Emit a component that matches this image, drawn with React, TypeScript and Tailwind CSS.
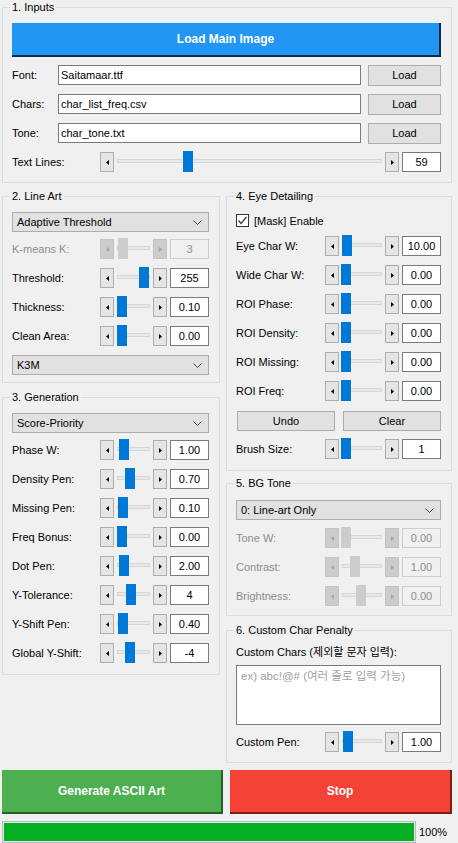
import React, { ReactNode } from "react";

// classic win32-style widgets for the ascii generator panel

function Group({ title, className, children }: { title: string; className: string; children: ReactNode }) {
    return (
        <div className={"relative border border-[#dcdcdc] flex flex-col " + className}>
            <span className="absolute left-[7px] top-[-8px] leading-[14px] px-[2px] bg-[#f0f0f0]">{title}</span>
            {children}
        </div>
    );
}

function Arrow({ dir, disabled }: { dir: "l" | "r"; disabled?: boolean }) {
    return (
        <div
            className={
                "w-[14px] h-[20px] shrink-0 border flex items-center justify-center " +
                (disabled ? "bg-[#cccccc] border-[#c4c4c4]" : "bg-[#e5e5e5] border-[#adadad]")
            }
        >
            <svg width="3" height="5" viewBox="0 0 3 5">
                {dir === "l" ? (
                    <polygon points="3,0 3,5 0,2.5" fill={disabled ? "#a3a3a3" : "#000"} />
                ) : (
                    <polygon points="0,0 0,5 3,2.5" fill={disabled ? "#a3a3a3" : "#000"} />
                )}
            </svg>
        </div>
    );
}

function Slider({ track, pos, disabled }: { track: string; pos: number; disabled?: boolean }) {
    return (
        <div className="flex h-[20px] shrink-0">
            <Arrow dir="l" disabled={disabled} />
            <div className={"relative h-[20px] " + track}>
                <div className="mt-[7px] mx-[3px] h-[4px] bg-[#e7eaea] border border-[#d6d6d6]" />
                <div
                    className={"absolute top-[-1px] w-[10px] h-[21px] " + (disabled ? "bg-[#cccccc]" : "bg-[#0078d7]")}
                    style={{ left: pos }}
                />
            </div>
            <Arrow dir="r" disabled={disabled} />
        </div>
    );
}

function ValueBox({ value, disabled }: { value: string; disabled?: boolean }) {
    return (
        <div
            className={
                "ml-[3px] w-[39px] h-[20px] shrink-0 border flex items-center justify-center " +
                (disabled ? "border-[#cccccc] text-[#8d8d8d]" : "border-[#7a7a7a] bg-white")
            }
        >
            {value}
        </div>
    );
}

function Row({
    label,
    value,
    pos,
    labelW,
    track,
    disabled,
    className = "",
}: {
    label: string;
    value: string;
    pos: number;
    labelW: string;
    track: string;
    disabled?: boolean;
    className?: string;
}) {
    return (
        <div className={"flex items-center h-[20px] " + className}>
            <span className={"shrink-0 " + labelW + (disabled ? " text-[#8d8d8d]" : "")}>{label}</span>
            <Slider track={track} pos={pos} disabled={disabled} />
            <ValueBox value={value} disabled={disabled} />
        </div>
    );
}

function Combo({ text, className = "" }: { text: string; className?: string }) {
    return (
        <div className={"h-[20px] bg-[#e1e1e1] border border-[#adadad] flex items-center pl-[4px] pr-[6px] " + className}>
            <span className="flex-1">{text}</span>
            <svg width="9" height="5" viewBox="0 0 9 5">
                <polyline points="0.5,0.5 4.5,4.5 8.5,0.5" fill="none" stroke="#444" strokeWidth="1" />
            </svg>
        </div>
    );
}

function FileRow({ label, file, className = "" }: { label: string; file: string; className?: string }) {
    return (
        <div className={"flex items-center h-[20px] " + className}>
            <span className="w-[46px] shrink-0">{label}</span>
            <div className="w-[303px] h-[20px] border border-[#7a7a7a] bg-white flex items-center pl-[2px]">{file}</div>
            <div className="ml-[7px] w-[73px] h-[21px] bg-[#e1e1e1] border border-[#adadad] flex items-center justify-center">
                Load
            </div>
        </div>
    );
}

const L = { labelW: "w-[88px]", track: "w-[39px]" };
const R = { labelW: "w-[89px]", track: "w-[46px]" };

export default function App() {
    return (
        <div className="w-[458px] h-[843px] overflow-hidden bg-[#f0f0f0] text-black text-[11px] leading-[14px] font-['Liberation_Sans','Noto_Sans_CJK_KR',sans-serif] flex flex-col pt-[7px]">
            <Group title="1. Inputs" className="ml-[2px] w-[450px] h-[177px] pt-[15px] pl-[9px] pr-[10px]">
                <div className="h-[34px] bg-[#2196f3] border-r-2 border-b-2 border-[#0c2c47] flex items-center justify-center text-white font-bold text-[12px]">
                    Load Main Image
                </div>
                <FileRow label="Font:" file="Saitamaar.ttf" className="mt-[8px]" />
                <FileRow label="Chars:" file="char_list_freq.csv" className="mt-[9px]" />
                <FileRow label="Tone:" file="char_tone.txt" className="mt-[9px]" />
                <Row label="Text Lines:" value="59" pos={69} labelW="w-[88px]" track="w-[271px]" className="mt-[9px]" />
            </Group>

            <div className="flex mt-[13px]">
                <div className="ml-[2px] w-[218px] flex flex-col">
                    <Group title="2. Line Art" className="h-[187px] pt-[15px] pl-[9px] pr-[10px]">
                        <Combo text="Adaptive Threshold" />
                        <Row label="K-means K:" value="3" pos={4} disabled {...L} className="mt-[7px]" />
                        <Row label="Threshold:" value="255" pos={25} {...L} className="mt-[9px]" />
                        <Row label="Thickness:" value="0.10" pos={3} {...L} className="mt-[9px]" />
                        <Row label="Clean Area:" value="0.00" pos={3} {...L} className="mt-[9px]" />
                        <Combo text="K3M" className="mt-[9px]" />
                    </Group>

                    <Group title="3. Generation" className="mt-[14px] h-[278px] pt-[15px] pl-[9px] pr-[10px]">
                        <Combo text="Score-Priority" />
                        <Row label="Phase W:" value="1.00" pos={5} {...L} className="mt-[7px]" />
                        <Row label="Density Pen:" value="0.70" pos={11} {...L} className="mt-[9px]" />
                        <Row label="Missing Pen:" value="0.10" pos={4} {...L} className="mt-[9px]" />
                        <Row label="Freq Bonus:" value="0.00" pos={3} {...L} className="mt-[9px]" />
                        <Row label="Dot Pen:" value="2.00" pos={5} {...L} className="mt-[9px]" />
                        <Row label="Y-Tolerance:" value="4" pos={12} {...L} className="mt-[9px]" />
                        <Row label="Y-Shift Pen:" value="0.40" pos={4} {...L} className="mt-[9px]" />
                        <Row label="Global Y-Shift:" value="-4" pos={11} {...L} className="mt-[9px]" />
                    </Group>
                </div>

                <div className="ml-[6px] w-[226px] flex flex-col">
                    <Group title="4. Eye Detailing" className="h-[275px] pt-[15px] pl-[9px] pr-[10px]">
                        <div className="flex items-center h-[17px]">
                            <div className="w-[13px] h-[13px] bg-white border border-[#333] flex items-center justify-center">
                                <svg width="11" height="11" viewBox="0 0 11 11">
                                    <polyline points="1.5,5.5 4,8.5 9.5,2" fill="none" stroke="#3c3c3c" strokeWidth="1.3" />
                                </svg>
                            </div>
                            <span className="ml-[5px]">[Mask] Enable</span>
                        </div>
                        <Row label="Eye Char W:" value="10.00" pos={3} {...R} className="mt-[7px]" />
                        <Row label="Wide Char W:" value="0.00" pos={2} {...R} className="mt-[9px]" />
                        <Row label="ROI Phase:" value="0.00" pos={2} {...R} className="mt-[9px]" />
                        <Row label="ROI Density:" value="0.00" pos={2} {...R} className="mt-[9px]" />
                        <Row label="ROI Missing:" value="0.00" pos={2} {...R} className="mt-[9px]" />
                        <Row label="ROI Freq:" value="0.00" pos={2} {...R} className="mt-[9px]" />
                        <div className="flex mt-[10px] h-[20px]">
                            <div className="ml-[1px] w-[98px] bg-[#e1e1e1] border border-[#adadad] flex items-center justify-center">Undo</div>
                            <div className="ml-[8px] w-[98px] bg-[#e1e1e1] border border-[#adadad] flex items-center justify-center">Clear</div>
                        </div>
                        <Row label="Brush Size:" value="1" pos={2} {...R} className="mt-[8px]" />
                    </Group>

                    <Group title="5. BG Tone" className="mt-[12px] h-[133px] pt-[16px] pl-[9px] pr-[10px]">
                        <Combo text="0: Line-art Only" />
                        <Row label="Tone W:" value="0.00" pos={2} disabled {...R} className="mt-[8px]" />
                        <Row label="Contrast:" value="1.00" pos={11} disabled {...R} className="mt-[9px]" />
                        <Row label="Brightness:" value="0.00" pos={17} disabled {...R} className="mt-[9px]" />
                    </Group>

                    <Group title="6. Custom Char Penalty" className="mt-[14px] h-[133px] pt-[14px] pl-[9px] pr-[10px]">
                        <span>Custom Chars (제외할 문자 입력):</span>
                        <div className="mt-[6px] h-[60px] bg-white border border-[#7a7a7a] pl-[4px] pt-[3px] text-[#a0a0a0] text-[11.5px]">
                            ex) abc!@# (여러 줄로 입력 가능)
                        </div>
                        <Row label="Custom Pen:" value="1.00" pos={4} {...R} className="mt-[7px]" />
                    </Group>
                </div>
            </div>

            <div className="flex mt-[7px] h-[44px] text-white font-bold text-[12px]">
                <div className="ml-[2px] w-[221px] bg-[#4caf50] border-r-2 border-b-2 border-[#2a5e2c] flex items-center justify-center">
                    Generate ASCII Art
                </div>
                <div className="ml-[7px] w-[222px] bg-[#f44336] border-r-2 border-b-2 border-[#7c1f19] flex items-center justify-center">
                    Stop
                </div>
            </div>

            <div className="flex items-center mt-[7px] h-[22px]">
                <div className="ml-[2px] w-[414px] h-[22px] border border-[#bcbcbc] bg-[#e6e6e6] p-[1px]">
                    <div className="w-full h-full bg-[#06b025]" />
                </div>
                <span className="ml-[3px]">100%</span>
            </div>
        </div>
    );
}
